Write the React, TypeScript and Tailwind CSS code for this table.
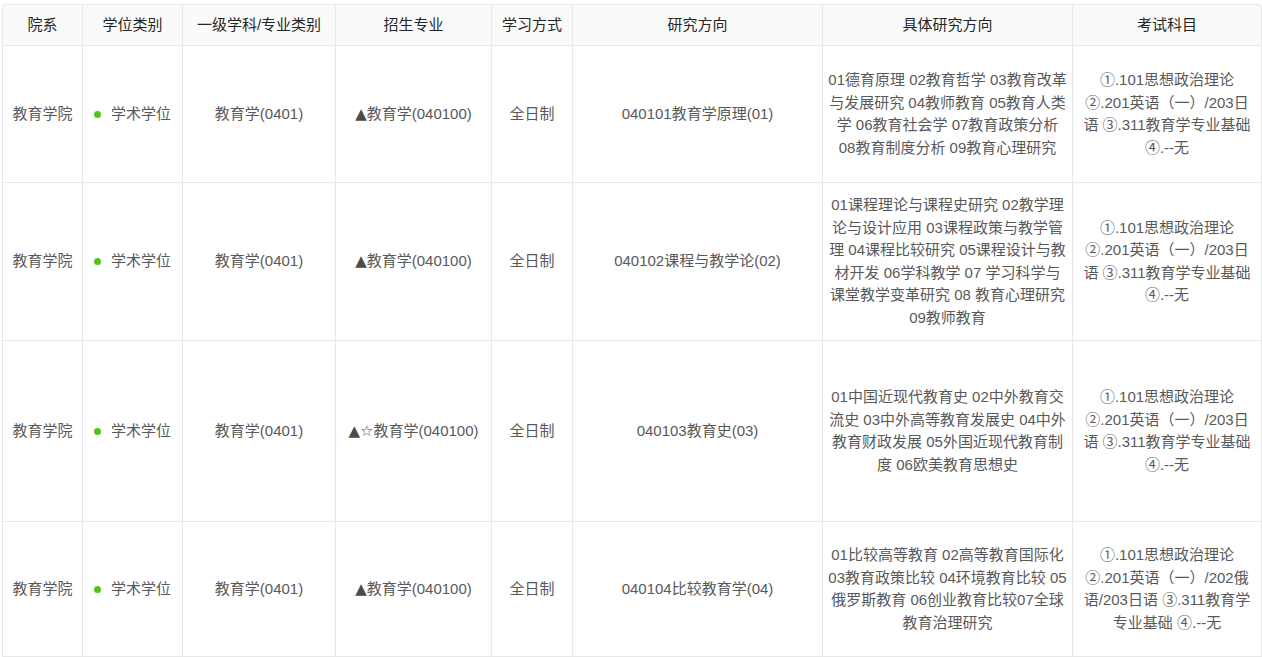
import React from "react";

const FONT = {
  fontFamily: '"Liberation Sans", "Noto Sans CJK SC", sans-serif',
};

const heads = ["院系", "学位类别", "一级学科/专业类别", "招生专业", "学习方式", "研究方向", "具体研究方向", "考试科目"];

interface Row {
  h: string;
  star: boolean;
  dir: string;
  detail: string[];
  exam: string[];
}

const rows: Row[] = [
  {
    h: "h-[137px]",
    star: false,
    dir: "040101教育学原理(01)",
    detail: ["01德育原理 02教育哲学 03教育改革", "与发展研究 04教师教育 05教育人类", "学 06教育社会学 07教育政策分析", "08教育制度分析 09教育心理研究"],
    exam: ["①.101思想政治理论", "②.201英语（一）/203日", "语 ③.311教育学专业基础", "④.--无"],
  },
  {
    h: "h-[158px]",
    star: false,
    dir: "040102课程与教学论(02)",
    detail: [
      "01课程理论与课程史研究 02教学理",
      "论与设计应用 03课程政策与教学管",
      "理 04课程比较研究 05课程设计与教",
      "材开发 06学科教学 07 学习科学与",
      "课堂教学变革研究 08 教育心理研究",
      "09教师教育",
    ],
    exam: ["①.101思想政治理论", "②.201英语（一）/203日", "语 ③.311教育学专业基础", "④.--无"],
  },
  {
    h: "h-[181px]",
    star: true,
    dir: "040103教育史(03)",
    detail: ["01中国近现代教育史 02中外教育交", "流史 03中外高等教育发展史 04中外", "教育财政发展 05外国近现代教育制", "度 06欧美教育思想史"],
    exam: ["①.101思想政治理论", "②.201英语（一）/203日", "语 ③.311教育学专业基础", "④.--无"],
  },
  {
    h: "h-[135px]",
    star: false,
    dir: "040104比较教育学(04)",
    detail: ["01比较高等教育 02高等教育国际化", "03教育政策比较 04环境教育比较 05", "俄罗斯教育 06创业教育比较07全球", "教育治理研究"],
    exam: ["①.101思想政治理论", "②.201英语（一）/202俄", "语/203日语 ③.311教育学", "专业基础 ④.--无"],
  },
];

const cell = "flex items-center justify-center border-r border-b border-[#e8e8e8] px-[6px] text-center";

function Lines({ lines }: { lines: string[] }) {
  return (
    <div>
      {lines.map((l) => (
        <div key={l} className="whitespace-nowrap">
          {l}
        </div>
      ))}
    </div>
  );
}

export default function App() {
  return (
    <div className="min-h-screen bg-white pl-[2px] pt-[4px]" style={FONT}>
      <div className="grid w-[1260px] grid-cols-[80px_100px_153px_156px_81px_250px_250px_189px] rounded-t-[4px] border-l border-t border-[#e8e8e8] text-[15px] leading-[22.5px] text-[#595959]">
        {heads.map((t, i) => (
          <div
            key={t}
            className={`${cell} h-[41px] bg-[#fafafa] text-[#262626] ${i === 0 ? "rounded-tl-[4px]" : ""} ${i === heads.length - 1 ? "rounded-tr-[4px]" : ""}`}
          >
            {t}
          </div>
        ))}
        {rows.map((r) => (
          <React.Fragment key={r.dir}>
            <div className={`${cell} ${r.h}`}>教育学院</div>
            <div className={`${cell} ${r.h}`}>
              <span className="mr-[10px] h-[7px] w-[7px] shrink-0 rounded-full bg-[#52c41a]" />
              学术学位
            </div>
            <div className={`${cell} ${r.h}`}>教育学(0401)</div>
            <div className={`${cell} ${r.h}`}>
              <span style={{ fontFamily: '"DejaVu Sans", sans-serif' }} className="text-[15px] text-[#4a4a4a]">
                {r.star ? "▲☆" : "▲"}
              </span>
              教育学(040100)
            </div>
            <div className={`${cell} ${r.h}`}>全日制</div>
            <div className={`${cell} ${r.h}`}>{r.dir}</div>
            <div className={`${cell} ${r.h}`}>
              <Lines lines={r.detail} />
            </div>
            <div className={`${cell} ${r.h}`}>
              <Lines lines={r.exam} />
            </div>
          </React.Fragment>
        ))}
      </div>
    </div>
  );
}
